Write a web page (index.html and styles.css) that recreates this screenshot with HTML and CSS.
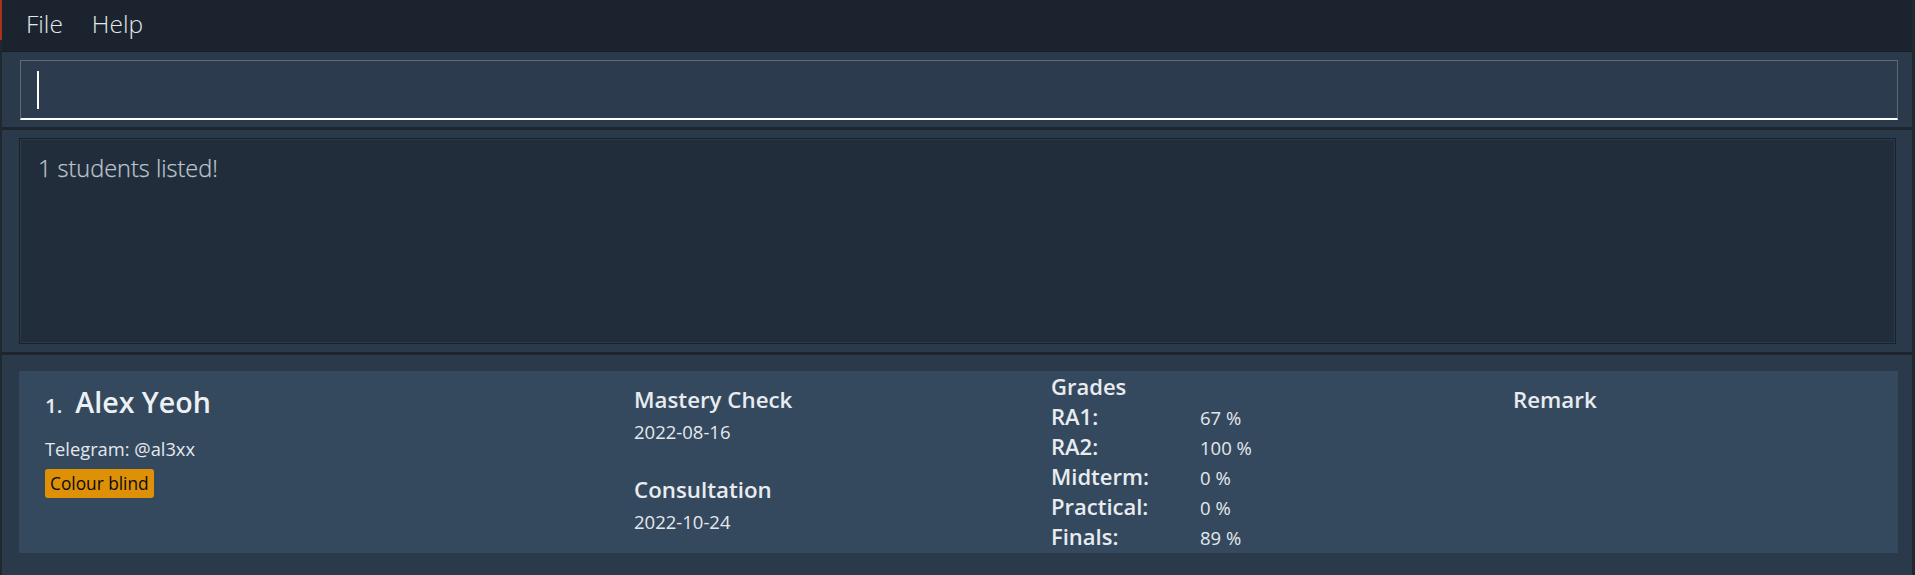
FILE: index.html
```html
<!DOCTYPE html>
<html lang="en">
<head>
<meta charset="utf-8">
<title>TA Assist</title>
<link rel="stylesheet" href="styles.css">
</head>
<body>
<div class="app">
  <nav class="menubar">
    <span class="menu-item">File</span>
    <span class="menu-item">Help</span>
  </nav>
  <section class="command-panel">
    <div class="command-field"><span class="caret"></span></div>
  </section>
  <section class="result-panel">
    <div class="result-box">1 students listed!</div>
  </section>
  <section class="list-panel">
    <article class="card">
      <div class="col col-person">
        <div class="name-row">
          <span class="index">1.</span>
          <span class="name">Alex Yeoh</span>
        </div>
        <div class="telegram">Telegram: @al3xx</div>
        <div class="tags"><span class="tag">Colour blind</span></div>
      </div>
      <div class="col col-sessions">
        <div class="heading">Mastery Check</div>
        <div class="date">2022-08-16</div>
        <div class="heading heading-gap">Consultation</div>
        <div class="date">2022-10-24</div>
      </div>
      <div class="col col-grades">
        <div class="grade-row"><span class="grade-label">Grades</span></div>
        <div class="grade-row"><span class="grade-label">RA1:</span><span class="grade-value">67 %</span></div>
        <div class="grade-row"><span class="grade-label">RA2:</span><span class="grade-value">100 %</span></div>
        <div class="grade-row"><span class="grade-label">Midterm:</span><span class="grade-value">0 %</span></div>
        <div class="grade-row"><span class="grade-label">Practical:</span><span class="grade-value">0 %</span></div>
        <div class="grade-row"><span class="grade-label">Finals:</span><span class="grade-value">89 %</span></div>
      </div>
      <div class="col col-remark">
        <div class="heading">Remark</div>
      </div>
    </article>
  </section>
</div>
</body>
</html>
```

FILE: styles.css
```css
* { box-sizing: border-box; }

html, body {
  margin: 0;
  height: 100%;
}

body {
  font-family: "Open Sans", "Noto Sans", sans-serif;
  background:
    linear-gradient(to bottom, #a8321f 0, #a8321f 40px, #1f2730 40px) no-repeat left top / 2px 100%,
    #1f2730;
  color: #e8ecf0;
  overflow: hidden;
}

.app {
  margin: 0 3px 0 2px;
  height: 100%;
  display: flex;
  flex-direction: column;
}

/* menu bar */
.menubar {
  height: 52px;
  background: #1b242e;
  border-bottom: 1px solid #161d25;
  display: flex;
  gap: 29px;
  padding-left: 24px;
}

.menu-item {
  font-size: 24.5px;
  font-weight: 300;
  line-height: 48px;
  color: #e4e8ec;
}

/* command box */
.command-panel {
  background: #2a3a4b;
  padding: 8px 14px 7px 18px;
}

.command-field {
  height: 60px;
  background: #2c3c4e;
  border: 1px solid #5b6b7a;
  border-bottom: 2px solid #ffffff;
  padding: 10px 0 0 16px;
}

.caret {
  display: block;
  width: 2px;
  height: 38px;
  background: #ffffff;
}

/* result display */
.result-panel {
  background: #2a3a4b;
  border-top: 3px solid #1e252d;
  padding: 8px 16px 8px 17px;
}

.result-box {
  height: 206px;
  background: #212d3b;
  border: 1px solid #19222c;
  box-shadow: inset 0 0 0 1px #2b3a49;
  padding: 14px 18px;
  font-size: 23.5px;
  font-weight: 300;
  line-height: 30px;
  color: #bcc6cf;
  -webkit-text-stroke: 0.25px #bcc6cf;
}

/* person list */
.list-panel {
  flex: 1;
  background: #2a3a4b;
  border-top: 3px solid #1e252d;
  padding: 16px 14px 0 17px;
}

.card {
  height: 182px;
  background: #34495e;
  display: grid;
  grid-template-columns: 615px 417px 462px 1fr;
  align-items: start;
}

.col-person {
  padding: 13px 0 0 26px;
}

.name-row {
  display: flex;
  align-items: baseline;
  gap: 13px;
  line-height: 36px;
}

.index {
  font-size: 20.5px;
  font-weight: 600;
  color: #e8ecf0;
}

.name {
  font-size: 28.6px;
  font-weight: 600;
  color: #eef1f4;
}

.telegram {
  margin-top: 13px;
  font-size: 18.3px;
  font-weight: 400;
  line-height: 26px;
  color: #e4e8ec;
}

.tags {
  margin-top: 7px;
  display: flex;
}

.tag {
  background: #de9107;
  color: #0a0a0a;
  font-size: 17.3px;
  font-weight: 500;
  line-height: 28px;
  padding: 1px 5px 0;
  border-radius: 3px;
}

.col-sessions,
.col-remark {
  padding-top: 14px;
}

.heading {
  font-size: 22.3px;
  font-weight: 600;
  line-height: 30px;
  color: #e8ecf0;
}

.heading-gap {
  margin-top: 26px;
}

.date {
  font-size: 18.5px;
  font-weight: 400;
  line-height: 34px;
  color: #e4e8ec;
}

.col-grades {
  padding-top: 0;
}

.grade-row {
  display: flex;
  align-items: baseline;
  height: 30px;
  line-height: 30px;
}

.grade-label {
  width: 149px;
  font-size: 22px;
  font-weight: 600;
  color: #e8ecf0;
}

.grade-value {
  font-size: 18.5px;
  font-weight: 400;
  color: #e4e8ec;
}
```
